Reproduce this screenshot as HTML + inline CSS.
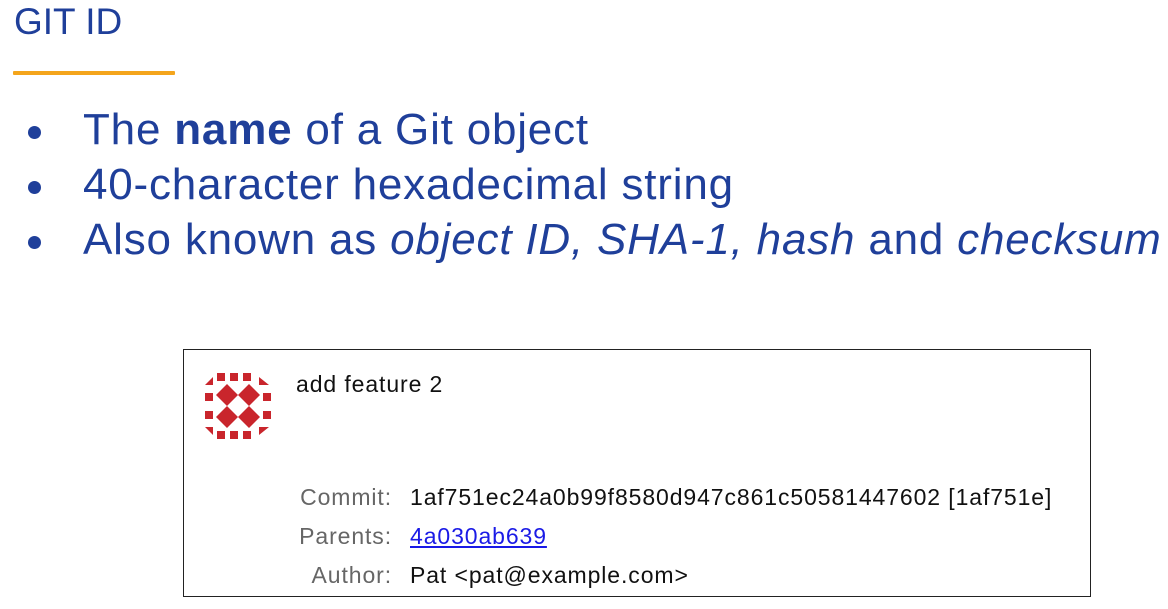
<!DOCTYPE html>
<html><head><style>
body{margin:0;width:1168px;height:609px;background:#fff;position:relative;overflow:hidden;font-family:"Liberation Sans",Arial,sans-serif;}
.t{position:absolute;left:14px;top:1px;font-size:37px;color:#1f3f9a;}
.u{position:absolute;left:13px;top:71px;width:162px;height:4px;background:#f4a51c;border-radius:1px;}
.b{position:absolute;left:83px;font-size:44px;letter-spacing:0.8px;color:#1f3f9a;white-space:nowrap;line-height:44px;}
.d{position:absolute;left:28px;width:13px;height:13px;border-radius:50%;background:#1f3f9a;}
.box{position:absolute;left:183px;top:349px;width:906px;height:246px;border:1.5px solid #222;}
.r{position:absolute;font-size:23px;letter-spacing:0.9px;white-space:nowrap;line-height:24px;}
.l{color:#666;text-align:right;width:300px;left:92px;}
.v{left:410px;color:#111;}
</style></head><body>
<div class="t">GIT ID</div>
<div class="u"></div>
<div class="d" style="top:126px"></div>
<div class="b" style="top:108px">The <b>name</b> of a Git object</div>
<div class="d" style="top:181px"></div>
<div class="b" style="top:163px">40-character hexadecimal string</div>
<div class="d" style="top:236px"></div>
<div class="b" style="top:218px">Also known as <i>object ID, SHA-1, hash</i> and <i>checksum</i></div>
<div class="box"></div>
<svg style="position:absolute;left:203px;top:371px" width="70" height="70" viewBox="0 0 70 70">
<g fill="#c9252c">
<rect x="14" y="2" width="8" height="8"/><rect x="27" y="2" width="8" height="8"/><rect x="40" y="2" width="8" height="8"/>
<rect x="14" y="60" width="8" height="8"/><rect x="27" y="60" width="8" height="8"/><rect x="40" y="60" width="8" height="8"/>
<rect x="2" y="22" width="8" height="8"/><rect x="2" y="40" width="8" height="8"/>
<rect x="60" y="22" width="8" height="8"/><rect x="60" y="40" width="8" height="8"/>
<polygon points="2,14 10,6 10,14"/><polygon points="56,6 66,14 56,14"/>
<polygon points="2,56 10,56 10,64"/><polygon points="56,56 66,56 56,64"/>
<polygon points="24,13 35,24 24,35 13,24"/><polygon points="46,13 57,24 46,35 35,24"/>
<polygon points="24,35 35,46 24,57 13,46"/><polygon points="46,35 57,46 46,57 35,46"/>
</g></svg>
<div class="r" style="left:296px;top:372px;color:#111">add feature 2</div>
<div class="r l" style="top:485px">Commit:</div>
<div class="r v" style="top:485px">1af751ec24a0b99f8580d947c861c50581447602 [1af751e]</div>
<div class="r l" style="top:524px">Parents:</div>
<div class="r v" style="top:524px;color:#1a1ae6;text-decoration:underline">4a030ab639</div>
<div class="r l" style="top:563px">Author:</div>
<div class="r v" style="top:563px">Pat &lt;pat@example.com&gt;</div>
</body></html>
